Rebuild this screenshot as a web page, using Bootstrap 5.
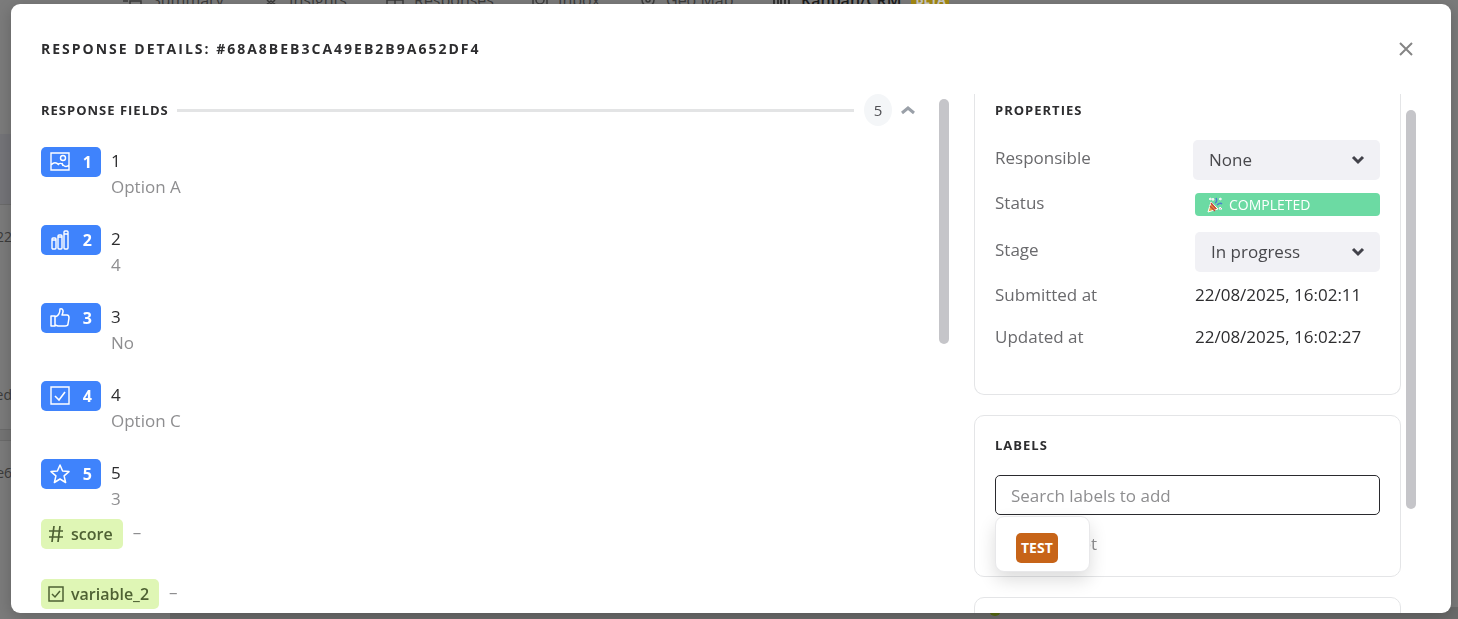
<!DOCTYPE html>
<html lang="en">
<head>
<meta charset="utf-8">
<meta name="viewport" content="width=device-width, initial-scale=1">
<title>Response details</title>
<link href="https://cdn.jsdelivr.net/npm/bootstrap@5.3.0/dist/css/bootstrap.min.css" rel="stylesheet">
<style>
  body { font-family: "Open Sans", "Noto Sans", sans-serif; font-size: 17px; line-height: 26px; color: #2d2d2f; background: #7b7b7b; }
  a { color: inherit; text-decoration: none; }
  svg { display: block; flex: none; fill: none; stroke: currentColor; }

  /* page behind the dialog */
  .board { height: 100vh; overflow: hidden; color: #3c3c3c; }
  .board-tabs { height: 24px; margin-top: -12px; padding-left: 122px; font-size: 16px; line-height: 24px; white-space: nowrap; }
  .board-tabs a { display: flex; align-items: center; gap: 10px; }
  .board-tabs .current { color: #1d1d1d; font-weight: 600; }
  .beta { background: #a58a12; color: #c9c9c9; font-size: 12px; line-height: 18px; padding: 0 4px; border-radius: 3px; font-weight: 700; }
  .board-side { width: 12px; font-size: 14px; direction: rtl; overflow: hidden; white-space: nowrap; }
  .board-head { height: 71px; margin-top: 122px; background: #747478; border-bottom: 1px solid #6b6b6b; }
  .board-cell { height: 225px; padding-top: 19px; border-bottom: 1px solid #6b6b6b; }
  .board-gap { height: 11px; background: #747474; border-bottom: 1px solid #6b6b6b; }
  .board-foot { height: 12px; padding-left: 170px; }
  .board-row { background: #6c6c6c; padding-left: 819px; }
  .dot { width: 12px; height: 9px; border-radius: 0 0 6px 6px; background: #566b10; }

  /* dialog */
  .overlay { padding: 4px 7px 6px 11px; }
  .sheet { background: #fff; border-radius: 9px; overflow: hidden; box-shadow: 0 4px 16px rgba(0,0,0,.2); }
  .sheet-head { height: 90px; padding: 0 35px 0 30px; }
  .sheet-title { font-size: 14px; font-weight: 700; letter-spacing: 2px; line-height: 20px; }
  .close-x { width: 20px; height: 20px; color: #858585; }
  .section-title { font-size: 13px; font-weight: 700; letter-spacing: 1px; line-height: 20px; }
  .sheet-body { min-height: 0; }
  .left-col { padding-left: 30px; }
  .left-head { height: 32px; margin-bottom: 20px; }
  .rule { height: 3px; margin: 0 10px 0 8px; background: #e3e4e5; }
  .count { width: 28px; height: 32px; border-radius: 50%; background: #f4f6f8; font-size: 15px; color: #505054; }
  .toggle { color: #9aa0a8; }
  .thumb { width: 10px; border-radius: 5px; background: #c5c5c9; }
  .thumb-left { height: 245px; margin: 5px 25px 0 23px; }
  .thumb-right { height: 399px; margin: 16px 35px 0 5px; }

  .answer { height: 78px; gap: 10px; }
  .answer-last { height: 61px; }
  .answer-text { padding-top: 2px; }
  .chip { height: 30px; border-radius: 5px; font-size: 16px; }
  .chip-q { width: 60px; padding: 0 9px; background: #3f83fc; color: #fff; font-weight: 700; margin-top: 1px; }
  .chip-v { padding: 0 10px 0 7px; gap: 7px; background: #dff6b5; color: #4e6133; font-weight: 600; }
  .variable { height: 60px; gap: 10px; }
  .muted { color: #8e8e90; }

  .right-col { width: 427px; }
  .panel { border: 1px solid #e4e5e7; border-radius: 10px; padding: 0 20px; margin-bottom: 20px; }
  .panel-top { border-top: 0; border-radius: 0 0 10px 10px; height: 301px; padding-top: 6px; }
  .panel-labels { height: 162px; padding-top: 19px; }
  .panel-next { height: 60px; }
  .panel .section-title { margin-bottom: 20px; }
  .prop-row { height: 42px; }
  .prop-row-select { height: 50px; }
  .prop-row-select .prop-name { padding-top: 5px; }
  .prop-name { width: 198px; color: #6a6a6d; }
  .prop { padding-left: 2px; }
  .picker { appearance: none; width: 100%; height: 40px; border: 0; border-radius: 5px; color: #48484c; padding: 0 16px;
    background: #f1f1f5 url("data:image/svg+xml,%3Csvg xmlns='http://www.w3.org/2000/svg' viewBox='0 0 14 10'%3E%3Cpath d='M2 2l5 5 5-5' fill='none' stroke='%2342424a' stroke-width='3'/%3E%3C/svg%3E") no-repeat right 15px center / 14px 10px; }
  .status { height: 23px; margin-top: 3px; border-radius: 4px; background: #6cdaa3; color: #fff; font-size: 14px; padding: 0 12px; gap: 6px; }
  .label-search { width: 100%; height: 40px; border: 1px solid #2a2a2e; border-radius: 5px; padding: 0 15px; color: #2d2d2f; }
  .label-search::placeholder { color: #8e8e90; opacity: 1; }
  .label-menu { top: 41px; left: 0; width: 95px; height: 56px; padding: 16px 20px 8px; line-height: 0; background: #fff; border: 1px solid #e8e8ea; border-radius: 9px; box-shadow: 0 8px 18px rgba(0,0,0,.14); }
  .label-tag { height: 30px; padding: 0 5px; border: 0; border-radius: 5px; background: #c76418; color: #fff; font-size: 14px; font-weight: 700; }
</style>
</head>
<body class="overflow-hidden">
<div class="board d-flex flex-column" aria-hidden="true">
  <nav class="board-tabs d-flex flex-shrink-0">
    <a href="#" style="width:141px"><svg width="20" height="16" viewBox="0 0 20 16" stroke-width="1.5"><path d="M1 9h5M1 13h5M8 9h11v5H8z"/></svg>Summary</a>
    <a href="#" style="width:123px"><svg width="16" height="16" viewBox="0 0 16 16" stroke-width="1.5"><path d="M2 14l6-5 6 5M4 8l4 4 4-4"/></svg>Insights</a>
    <a href="#" style="width:146px"><svg width="18" height="16" viewBox="0 0 18 16" stroke-width="1.5"><path d="M1 1h16v12H1zM1 8h16M9 1v12"/></svg>Responses</a>
    <a href="#" style="width:108px"><svg width="16" height="16" viewBox="0 0 16 16" stroke-width="1.5"><path d="M1 1h14v14H1zM4 8a4 4 0 008 0"/></svg>Inbox</a>
    <a href="#" style="width:133px"><svg width="16" height="16" viewBox="0 0 16 16" stroke-width="1.5"><circle cx="8" cy="8" r="6"/><circle cx="8" cy="8" r="2"/></svg>Geo Map</a>
    <a href="#" class="current"><svg width="18" height="20" viewBox="0 0 18 20" stroke-width="1.5"><path d="M1 1h4v17H1zM8 1h4v17H8zM16 1v17"/></svg>Kanban/CRM <span class="beta">BETA</span></a>
  </nav>
  <div class="board-side flex-grow-1">
    <div class="board-head"></div>
    <div class="board-cell">22<div style="height:132px"></div>ed</div>
    <div class="board-gap"></div>
    <div class="board-cell">e6</div>
  </div>
  <div class="board-foot d-flex flex-shrink-0"><div class="board-row flex-grow-1"><div class="dot"></div></div></div>
</div>

<div class="overlay position-fixed top-0 start-0 w-100 h-100">
  <section class="sheet d-flex flex-column h-100" role="dialog" aria-labelledby="dlg-title">
    <header class="sheet-head d-flex align-items-center justify-content-between flex-shrink-0">
      <h1 class="sheet-title m-0" id="dlg-title">RESPONSE DETAILS: #68A8BEB3CA49EB2B9A652DF4</h1>
      <button type="button" class="close-x btn p-0 border-0 d-flex align-items-center justify-content-center" aria-label="Close">
        <svg width="14" height="14" viewBox="0 0 14 14" stroke-width="2"><path d="M1 1l12 12M13 1L1 13"/></svg>
      </button>
    </header>

    <div class="sheet-body d-flex flex-grow-1 overflow-hidden">
      <div class="left-col flex-grow-1">
        <div class="left-head d-flex align-items-center">
          <h2 class="section-title m-0">RESPONSE FIELDS</h2>
          <div class="rule flex-grow-1"></div>
          <span class="count d-flex align-items-center justify-content-center">5</span>
          <button type="button" class="toggle btn p-0 border-0 ms-2" aria-label="Collapse">
            <svg width="16" height="12" viewBox="0 0 16 12" stroke-width="3"><path d="M2 9l6-5 6 5"/></svg>
          </button>
        </div>
        <div class="answer d-flex align-items-start">
          <span class="chip chip-q d-flex align-items-center justify-content-between"><svg width="20" height="20" viewBox="0 0 20 20" stroke-width="1.4"><path d="M1 1h18v17H1zM1 13c3-3 5-3 8 0M8 12c2-1 4-1 5 1 2 2 4 2 6 0M13 14l-1-3"/><circle cx="13" cy="6" r="2.5"/></svg>1</span>
          <div class="answer-text">1<div class="muted">Option A</div></div>
        </div>
        <div class="answer d-flex align-items-start">
          <span class="chip chip-q d-flex align-items-center justify-content-between"><svg width="20" height="20" viewBox="0 0 20 20" stroke-width="1.4"><rect x="2" y="8" width="4" height="11" rx="1"/><rect x="8" y="5" width="4" height="14" rx="1"/><rect x="14" y="1" width="4" height="18" rx="1"/><path d="M2 10h4M8 7h4M14 4h4"/></svg>2</span>
          <div class="answer-text">2<div class="muted">4</div></div>
        </div>
        <div class="answer d-flex align-items-start">
          <span class="chip chip-q d-flex align-items-center justify-content-between"><svg width="20" height="20" viewBox="0 0 20 20" stroke-width="1.5" stroke-linejoin="round"><path d="M1 8h4v10H1zM5 9c3-1 5-4 5-8 3-1 4 2 2 6h5c2 0 2 2 2 3l-1 6c0 1-1 2-3 2H8l-3-1"/></svg>3</span>
          <div class="answer-text">3<div class="muted">No</div></div>
        </div>
        <div class="answer d-flex align-items-start">
          <span class="chip chip-q d-flex align-items-center justify-content-between"><svg width="20" height="20" viewBox="0 0 20 20" stroke-width="1.4"><path d="M1 1h18v17H1z"/><path d="M5 10l4 4 6-8" stroke-width="1.6"/></svg>4</span>
          <div class="answer-text">4<div class="muted">Option C</div></div>
        </div>
        <div class="answer answer-last d-flex align-items-start">
          <span class="chip chip-q d-flex align-items-center justify-content-between"><svg width="20" height="20" viewBox="0 0 20 20" stroke-width="1.5" stroke-linejoin="round"><path d="M10 1l2.600 6 6.400.6-4.900 4.300L15.600 18.500 10 15l-5.600 3.500 1.500-6.600L1 7.600 7.400 7z"/></svg>5</span>
          <div class="answer-text">5<div class="muted">3</div></div>
        </div>
        <div class="variable d-flex align-items-start">
          <span class="chip chip-v d-flex align-items-center"><svg width="16" height="16" viewBox="0 0 16 16" stroke-width="1.7"><path d="M1 5h14M1 11h14M6 0L4 16M12 0l-2 16"/></svg>score</span>
          <span class="muted">–</span>
        </div>
        <div class="variable d-flex align-items-start">
          <span class="chip chip-v d-flex align-items-center"><svg width="16" height="16" viewBox="0 0 16 16" stroke-width="1.5"><path d="M1 1h14v14H1zM4 8l3 3 5-6"/></svg>variable_2</span>
          <span class="muted">–</span>
        </div>
      </div>
      <div class="thumb thumb-left flex-shrink-0"></div>

      <div class="right-col flex-shrink-0">
        <section class="panel panel-top">
          <h2 class="section-title">PROPERTIES</h2>
          <div class="prop-row prop-row-select d-flex align-items-start"><label class="prop-name" for="responsible">Responsible</label><div class="flex-grow-1"><select class="picker" id="responsible"><option>None</option></select></div></div>
          <div class="prop-row d-flex align-items-start"><span class="prop-name">Status</span><div class="prop flex-grow-1"><div class="status d-flex align-items-center">
            <svg width="16" height="16" viewBox="0 0 16 16" stroke="none"><path d="M1 15L4 5l7 7z" fill="#e8a33c"/><path d="M3 9l5 5M4 6l5 6" stroke="#c4483f" stroke-width="1.500"/><path d="M8 6c2-1 2-3 1-5M10 8c2-2 4-2 5-1" stroke="#4a7ed0" stroke-width="1.500"/><path d="M12 2l2-1v2zM2 2l2-1v2zM13 10l2 2h-3zM6 1l1 2H5z" fill="#d4528f"/></svg>COMPLETED</div></div></div>
          <div class="prop-row prop-row-select d-flex align-items-start"><label class="prop-name" for="stage">Stage</label><div class="prop flex-grow-1"><select class="picker" id="stage"><option>In progress</option></select></div></div>
          <div class="prop-row d-flex align-items-start"><span class="prop-name">Submitted at</span><span class="prop">22/08/2025, 16:02:11</span></div>
          <div class="prop-row d-flex align-items-start"><span class="prop-name">Updated at</span><span class="prop">22/08/2025, 16:02:27</span></div>
        </section>
        <section class="panel panel-labels">
          <h2 class="section-title"><label for="labels">LABELS</label></h2>
          <div class="position-relative mb-3">
            <input class="label-search d-block" id="labels" type="text" placeholder="Search labels to add">
            <div class="label-menu position-absolute"><button type="button" class="label-tag">TEST</button></div>
          </div>
          <div class="muted">No labels yet</div>
        </section>
        <section class="panel panel-next"></section>
      </div>
      <div class="thumb thumb-right flex-shrink-0"></div>
    </div>
  </section>
</div>
<script src="https://cdn.jsdelivr.net/npm/bootstrap@5.3.0/dist/js/bootstrap.bundle.min.js"></script>
</body>
</html>
